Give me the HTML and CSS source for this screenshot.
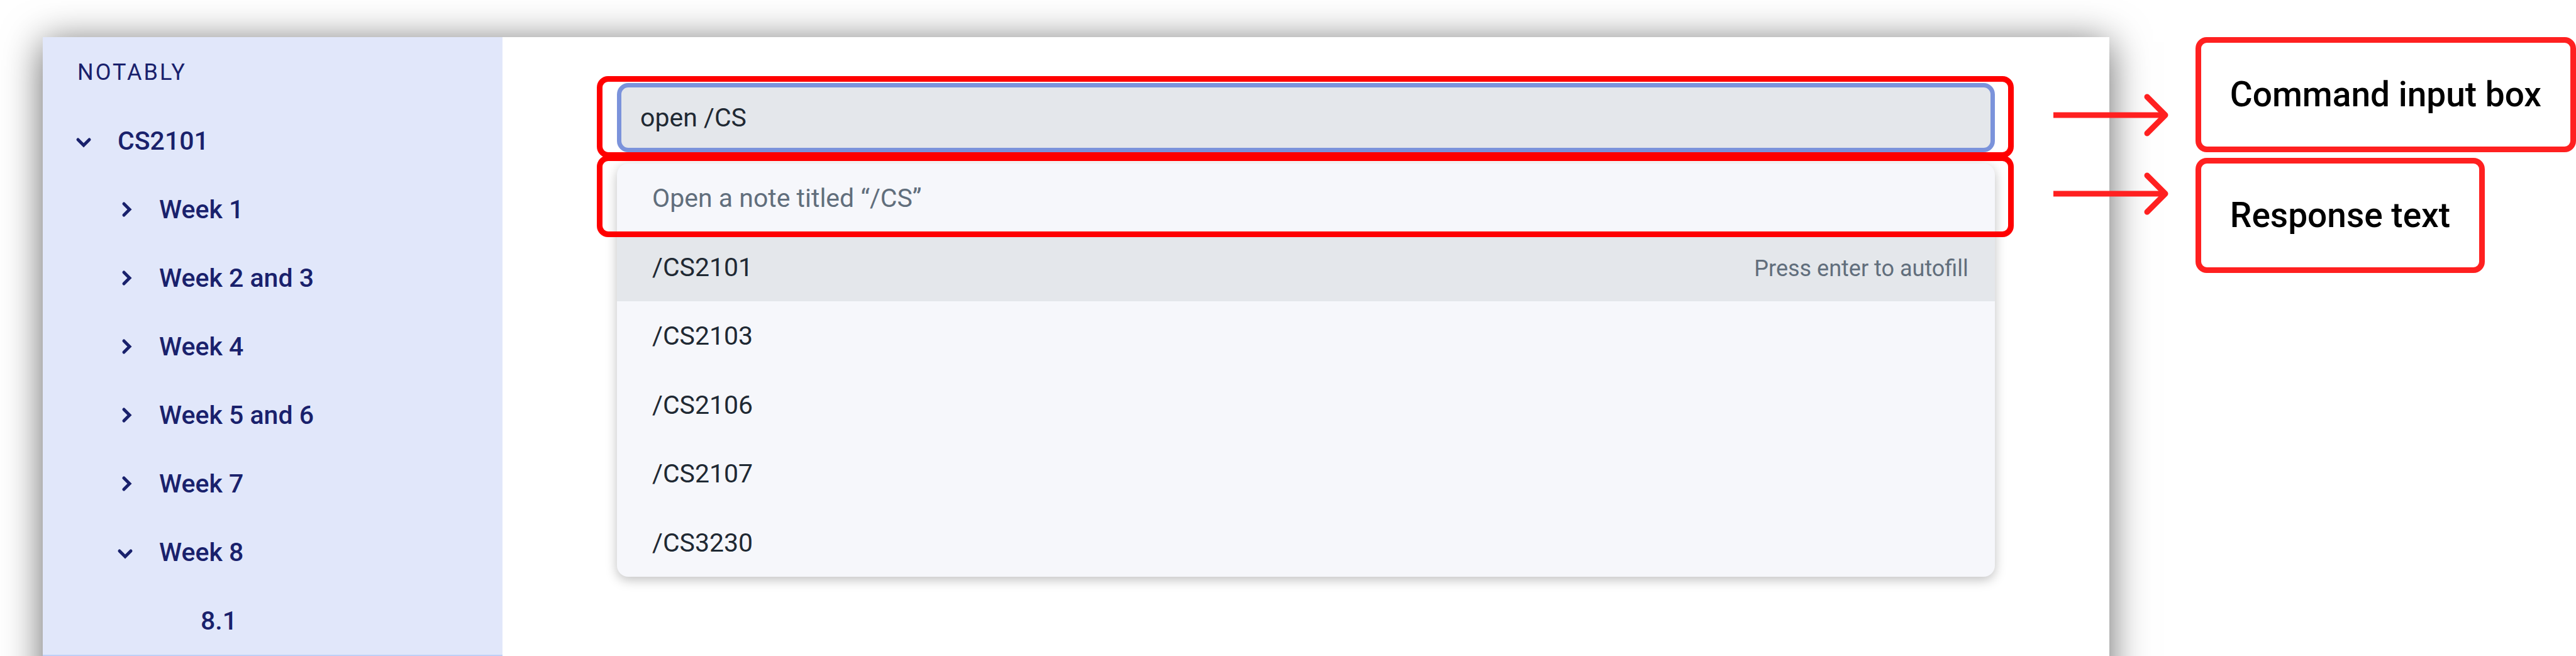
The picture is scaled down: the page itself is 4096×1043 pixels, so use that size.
FILE: index.html
```html
<!DOCTYPE html>
<html lang="en">
<head>
  <meta charset="utf-8">
  <title>Notably</title>
  <link rel="stylesheet" href="styles.css">
</head>
<body>
  <svg class="symbols" aria-hidden="true">
    <symbol id="chevron-down" viewBox="0 0 48 48"><path d="M15 22 L24 31 L33 22"/></symbol>
    <symbol id="chevron-right" viewBox="0 0 48 48"><path d="M22 15 L31 24 L22 33"/></symbol>
    <symbol id="arrow" viewBox="0 0 184 68"><path class="shaft" d="M0 34 H178"/><path d="M149 5 L178 34 L149 63"/></symbol>
  </svg>

  <div class="page">
    <div class="window">
      <nav class="sidebar" aria-label="Notes">
        <h1 class="brand">NOTABLY</h1>
        <ul class="tree">
          <li>
            <button class="note" type="button" aria-expanded="true"><svg class="chevron"><use href="#chevron-down"/></svg>CS2101</button>
            <ul class="tree nested">
              <li><button class="note" type="button" aria-expanded="false"><svg class="chevron"><use href="#chevron-right"/></svg>Week 1</button></li>
              <li><button class="note" type="button" aria-expanded="false"><svg class="chevron"><use href="#chevron-right"/></svg>Week 2 and 3</button></li>
              <li><button class="note" type="button" aria-expanded="false"><svg class="chevron"><use href="#chevron-right"/></svg>Week 4</button></li>
              <li><button class="note" type="button" aria-expanded="false"><svg class="chevron"><use href="#chevron-right"/></svg>Week 5 and 6</button></li>
              <li><button class="note" type="button" aria-expanded="false"><svg class="chevron"><use href="#chevron-right"/></svg>Week 7</button></li>
              <li>
                <button class="note" type="button" aria-expanded="true"><svg class="chevron"><use href="#chevron-down"/></svg>Week 8</button>
                <ul class="tree nested">
                  <li><button class="note leaf" type="button">8.1</button></li>
                </ul>
              </li>
            </ul>
          </li>
        </ul>
        <div class="current"></div>
      </nav>

      <main class="main">
        <div class="field">
          <input class="command" type="text" value="open /CS" aria-label="Command">
          <div class="outline outline-input"></div>
        </div>
        <div class="panel">
          <p class="response">Open a note titled “/CS”</p>
          <button class="option selected" type="button">/CS2101<span class="hint">Press enter to autofill</span></button>
          <button class="option" type="button">/CS2103</button>
          <button class="option" type="button">/CS2106</button>
          <button class="option" type="button">/CS2107</button>
          <button class="option" type="button">/CS3230</button>
          <div class="outline outline-response"></div>
        </div>
      </main>
    </div>

    <aside class="callouts">
      <p class="callout">Command input box</p>
      <p class="callout">Response text</p>
      <svg class="arrow arrow-input" aria-hidden="true"><use href="#arrow"/></svg>
      <svg class="arrow arrow-response" aria-hidden="true"><use href="#arrow"/></svg>
    </aside>
  </div>
</body>
</html>
```
FILE: styles.css
```css
* {
  box-sizing: border-box;
}

body {
  margin: 0;
  background: #fff;
  color: #1f2933;
  font-family: Roboto, "Liberation Sans", sans-serif;
  font-size: 41px;
  line-height: 48px;
}

button,
input {
  font: inherit;
  color: inherit;
}

button {
  border: 0;
  background: none;
  text-align: left;
}

h1,
p,
ul {
  margin: 0;
  padding: 0;
}

.symbols {
  position: absolute;
  width: 0;
  height: 0;
}

.page {
  display: flex;
  align-items: flex-start;
  gap: 137px;
  height: 100vh;
  padding: 59px 0 0 68px;
  overflow: hidden;
}

.window {
  display: flex;
  flex: 1;
  min-height: 110vh;
  background: #fff;
  box-shadow: 0 8px 58px rgba(0, 0, 0, 0.6);
}

/* Sidebar */

.sidebar {
  flex: 0 0 731px;
  background: #e1e7fa;
  color: #19216c;
}

.brand {
  padding: 32px 55px 30px;
  font-size: 36px;
  font-weight: 400;
  line-height: 48px;
  letter-spacing: 3px;
}

.tree {
  list-style: none;
}

.tree .note {
  padding-left: 41px;
}

.nested .note {
  padding-left: 107px;
}

.nested .nested .leaf {
  padding-left: 251px;
}

.note {
  display: flex;
  align-items: center;
  gap: 30px;
  width: 100%;
  height: 109px;
  font-weight: 500;
}

.chevron {
  width: 48px;
  height: 48px;
  fill: none;
  stroke: currentColor;
  stroke-width: 5px;
  stroke-linecap: round;
}

.current {
  height: 109px;
  background: #bed0f7;
}

/* Command area */

.main {
  display: flex;
  flex: 1;
  flex-direction: column;
  gap: 18px;
  padding: 73px 182px;
}

.field,
.panel {
  position: relative;
}

.command {
  display: block;
  width: 100%;
  height: 110px;
  padding: 0 30px;
  border: 7px solid #7b93db;
  border-radius: 18px;
  background: #e4e7eb;
}

.panel {
  display: grid;
  grid-auto-rows: 1fr;
  min-height: 657px;
  border-radius: 18px;
  background: #f6f7fb;
  box-shadow: 0 5px 18px rgba(0, 0, 0, 0.25);
}

.response,
.option {
  display: flex;
  align-items: baseline;
  justify-content: space-between;
  padding: 31px 42px 30px 56px;
}

.response,
.hint {
  color: #616e7c;
}

.selected {
  background: #e4e7eb;
}

.hint {
  font-size: 36px;
  line-height: 40px;
}

/* Annotations */

.outline {
  position: absolute;
  left: -32px;
  right: -30px;
  height: 130px;
  border: 9px solid #f00;
  border-radius: 18px;
  pointer-events: none;
}

.outline-input {
  top: -11px;
}

.outline-response {
  top: -13px;
}

.callouts {
  position: relative;
  display: flex;
  flex: 0 0 605px;
  flex-direction: column;
  align-items: flex-start;
  gap: 9px;
}

.callout {
  padding: 0 46px;
  border: 9px solid #ff2020;
  border-radius: 18px;
  color: #000;
  font-size: 55px;
  font-weight: 500;
  line-height: 165px;
  white-space: nowrap;
}

.arrow {
  position: absolute;
  left: -226px;
  width: 184px;
  height: 68px;
  fill: none;
  stroke: #ff2020;
  stroke-width: 9px;
  stroke-linecap: round;
  stroke-linejoin: round;
}

.shaft {
  stroke-linecap: butt;
}

.arrow-input {
  top: 90px;
}

.arrow-response {
  top: 215px;
}
```
